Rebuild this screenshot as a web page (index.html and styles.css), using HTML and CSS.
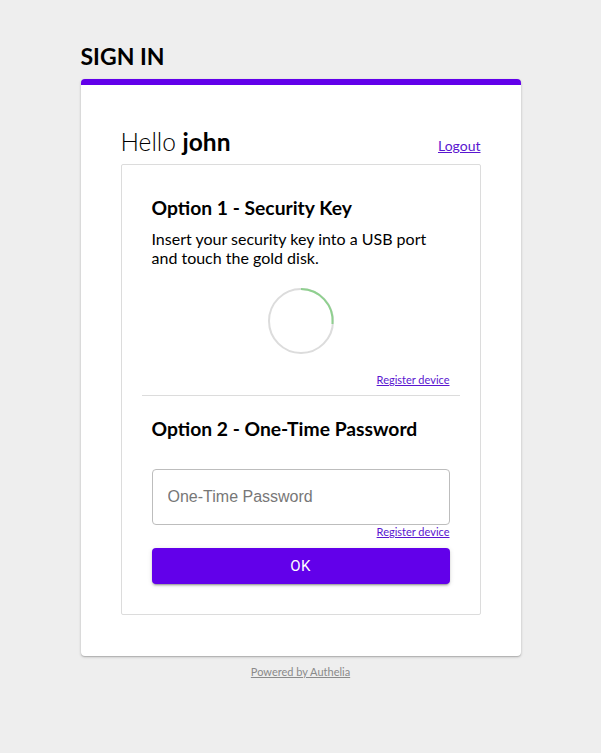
FILE: index.html
```html
<!DOCTYPE html>
<html>
<head>
<meta charset="utf-8">
<link rel="stylesheet" href="styles.css">
</head>
<body>
<main class="page">
  <h1 class="title">SIGN IN</h1>
  <section class="card">
    <div class="hello-row">
      <div class="hello">Hello <b>john</b></div>
      <a class="logout" href="#">Logout</a>
    </div>
    <div class="methods">
      <div class="method">
        <h2 class="method-title">Option 1 - Security Key</h2>
        <p class="method-text">Insert your security key into a USB port and touch the gold disk.</p>
        <div class="spinner-wrap">
          <svg class="spinner" width="68" height="68" viewBox="0 0 68 68">
            <circle cx="34" cy="34" r="32" fill="none" stroke="#dcdcdc" stroke-width="2"/>
            <path d="M34 2 A32 32 0 0 1 65.5 37" fill="none" stroke="#8fd08f" stroke-width="2"/>
          </svg>
        </div>
        <div class="reg-row"><a class="reg" href="#">Register device</a></div>
      </div>
      <hr class="divider">
      <div class="method">
        <h2 class="method-title">Option 2 - One-Time Password</h2>
        <input class="otp" type="text" placeholder="One-Time Password">
        <div class="reg-row tight"><a class="reg" href="#">Register device</a></div>
        <button class="ok">OK</button>
      </div>
    </div>
  </section>
  <footer class="footer"><a href="#">Powered by Authelia</a></footer>
</main>
</body>
</html>
```
FILE: styles.css
```css
* { box-sizing: border-box; }
html, body { margin: 0; padding: 0; }
body {
  background: #eeeeee;
  font-family: Lato, "Noto Sans", sans-serif;
  color: #000;
}
.page {
  width: 440px;
  margin: 0 auto;
  padding-top: 42px;
}
.title {
  margin: 0 0 9px 0;
  font-size: 23px;
  font-weight: 700;
  line-height: 28px;
}
.card {
  background: #fff;
  border-top: 6px solid #6200ea;
  border-radius: 4px;
  box-shadow: 0 1px 3px rgba(0,0,0,0.2), 0 1px 1px rgba(0,0,0,0.14);
  padding: 40px 40px 41px;
}
.hello-row {
  display: flex;
  justify-content: space-between;
  align-items: baseline;
  height: 35px;
  padding-top: 2px;
  margin-bottom: 4px;
}
.hello {
  font-size: 24.5px;
  line-height: 30px;
  font-weight: 300;
}
.hello b { font-weight: 700; }
.logout {
  font-size: 14px;
  color: #5a16d0;
  line-height: 18px;
}
.methods {
  border: 1px solid #dcdcdc;
  border-radius: 2px;
  padding: 0 20px;
}
.method {
  padding: 30px 10px 0;
}
.method + .divider + .method { padding-top: 20px; padding-bottom: 30px; }
.method-title {
  margin: 0;
  font-size: 19.3px;
  font-weight: 700;
  line-height: 26px;
}
.method-text {
  margin: 8px 0 0;
  font-size: 16px;
  line-height: 19px;
}
.spinner-wrap {
  display: flex;
  justify-content: center;
  margin-top: 20px;
}
.spinner { display: block; }
.reg-row {
  display: flex;
  justify-content: flex-end;
  margin-top: 18px;
}
.reg-row.tight { margin-top: 0; }
.reg {
  font-size: 11px;
  line-height: 14px;
  color: #5a16d0;
}
.divider {
  border: 0;
  border-top: 1px solid #dcdcdc;
  margin: 8px 0 0;
}
.otp {
  display: block;
  width: 100%;
  height: 56px;
  margin-top: 27px;
  border: 1px solid #bdbdbd;
  border-radius: 4px;
  padding: 0 15px;
  font-family: "Liberation Sans", Arial, sans-serif;
  font-size: 16px;
  color: #333;
  outline: none;
}
.otp::placeholder { color: #777; }
.ok {
  display: block;
  width: 100%;
  height: 36px;
  margin-top: 9px;
  border: 0;
  border-radius: 4px;
  background: #6200ea;
  color: #fff;
  font-family: Roboto, sans-serif;
  font-size: 15px;
  letter-spacing: 0.5px;
  box-shadow: 0 3px 1px -2px rgba(0,0,0,0.2), 0 2px 2px 0 rgba(0,0,0,0.14), 0 1px 5px 0 rgba(0,0,0,0.12);
}
.footer {
  text-align: center;
  padding-top: 4px;
}
.footer a {
  font-size: 11px;
  color: #8a8a8a;
}
```
